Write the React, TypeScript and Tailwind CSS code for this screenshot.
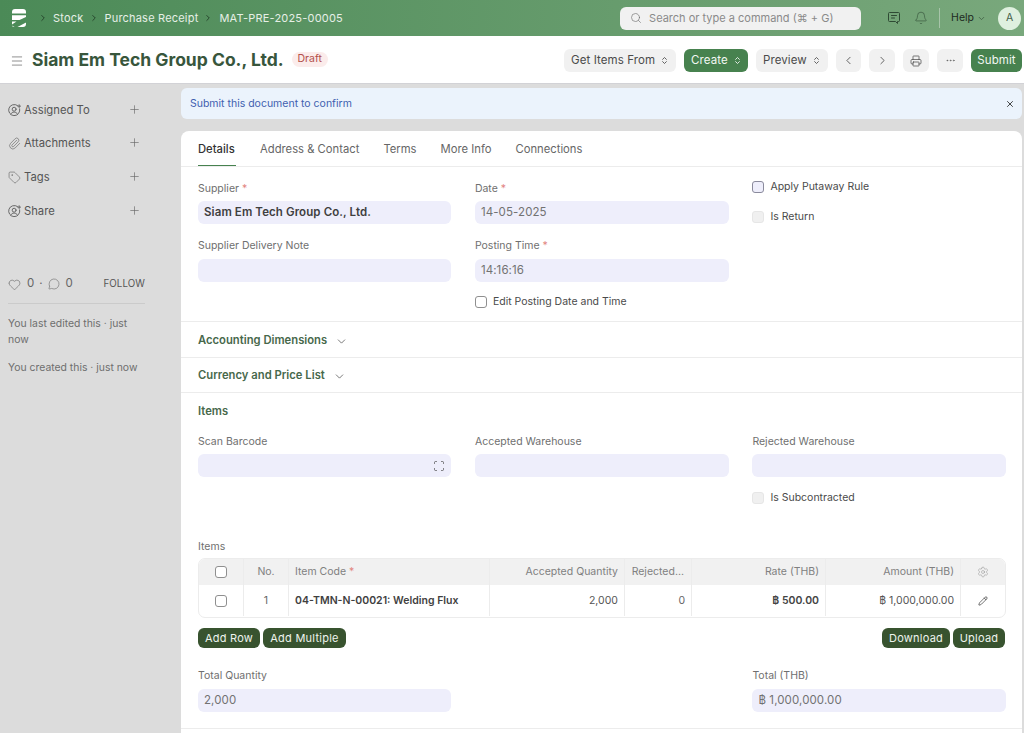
import React from "react";
import { Search, Bell, ChevronDown, ChevronLeft, ChevronRight, ChevronsUpDown, Printer, Ellipsis, X, Plus, Paperclip, Tag, Heart, MessageCircle, Settings, Pencil, Scan, Menu } from "lucide-react";

function Logo() {
  return (
    <svg width="14" height="18" viewBox="0 0 14 18" className="shrink-0">
      <path d="M3 0h8a3 3 0 0 1 3 3v1.6H0V3a3 3 0 0 1 3-3z" fill="#fff" />
      <path d="M0 6.2h14V8L7.5 11H0z" fill="#fff" />
      <path d="M14 9.7V15a3 3 0 0 1-3 3H5.5L14 13.6z" fill="#fff" />
      <path d="M0 12.6h4.5L0 15.6z" fill="#fff" />
      <path d="M0 16.4 L2.6 18H2.4A2.4 2.4 0 0 1 0 16.4z" fill="#fff" />
    </svg>
  );
}

function CircleUserPlus() {
  return (
    <svg width="13" height="13" viewBox="0 0 14 14" fill="none" stroke="#5f5f5f" strokeWidth="1" strokeLinecap="round" className="shrink-0">
      <path d="M10.2 1.6A6 6 0 1 0 12.6 5.2" />
      <circle cx="6.6" cy="5.6" r="2.1" />
      <path d="M3 11c.8-1.7 2-2.3 3.6-2.3s2.8.6 3.6 2.3" />
      <path d="M12 .8v3M10.5 2.3h3" />
    </svg>
  );
}

function Btn({ children, primary, className = "" }: { children: React.ReactNode; primary?: boolean; className?: string }) {
  return (
    <div className={`h-[23px] flex items-center rounded-[6px] text-[11.5px] tracking-[0.1px] ${primary ? "bg-[#47824f] text-[#f2f7f2]" : "bg-[#f1f1f1] text-[#4b4b4b]"} ${className}`}>
      {children}
    </div>
  );
}

function Label({ children, req }: { children: React.ReactNode; req?: boolean }) {
  return (
    <div className="text-[10.5px] leading-[14px] text-[#6f6f6f] h-[14px]">
      {children}
      {req && <span className="text-[#e2857f] ml-[3px]">*</span>}
    </div>
  );
}

function Input({ children, bold, right, mt = "mt-[5px]" }: { children?: React.ReactNode; bold?: boolean; right?: React.ReactNode; mt?: string }) {
  return (
    <div className={`${mt} h-[23px] rounded-[6px] bg-[#eeeefb] px-[6px] flex items-center justify-between tracking-[0.1px] ${bold ? "font-semibold text-[#3f3f3f] text-[11.5px]" : "text-[#727272] text-[11.5px]"}`}>
      <span>{children}</span>
      {right}
    </div>
  );
}

function Check({ disabled, tint }: { disabled?: boolean; tint?: boolean }) {
  return (
    <span className={`inline-block w-[12px] h-[12px] rounded-[3px] border shrink-0 ${disabled ? "bg-[#f0f0f0] border-[#e6e6e6]" : tint ? "bg-[#eeeefb] border-[#8a8a9c]" : "bg-white border-[#8f8f8f]"}`} />
  );
}

function CheckRow({ label, disabled, tint }: { label: string; disabled?: boolean; tint?: boolean }) {
  return (
    <div className="flex items-center gap-[6px] h-[14px]">
      <Check disabled={disabled} tint={tint} />
      <span className="text-[10.5px] text-[#4a4a4a]">{label}</span>
    </div>
  );
}

function SideItem({ icon, label, mt }: { icon: React.ReactNode; label: string; mt: string }) {
  return (
    <div className={`flex items-center justify-between h-[16px] ${mt}`}>
      <div className="flex items-center gap-[3px] text-[11.25px] text-[#555]">
        <span className="w-[13px] flex justify-center">{icon}</span>
        <span>{label}</span>
      </div>
      <Plus size={13} strokeWidth={1.2} color="#666" className="-mt-[2px]" />
    </div>
  );
}

function Cell({ children, className = "", sep = true }: { children?: React.ReactNode; className?: string; sep?: boolean }) {
  return <div className={`flex items-center px-[6px] ${sep ? "border-r border-[#ececec]" : ""} ${className}`}>{children}</div>;
}

const cols = "grid grid-cols-[45px_45px_201px_135px_67px_134px_135px_1fr]";
const formCols = "grid grid-cols-[253.4px_254px_1fr] gap-x-[23.5px]";

export default function App() {
  return (
    <div className="w-[1024px] h-[733px] overflow-hidden bg-[#dcdcdc] flex flex-col font-['Inter',sans-serif]">
      {/* Navbar */}
      <div className="h-[36px] shrink-0 bg-gradient-to-r from-[#4b8a57] to-[#79a87c] flex items-center pl-[12px] pr-[3px]">
        <Logo />
        <div className="flex items-center text-[11px] tracking-[0.2px] text-[#e6efe6] ml-[12px]">
          <ChevronRight size={10} color="#1f3a24" strokeWidth={2} />
          <span className="ml-[5px]">Stock</span>
          <ChevronRight size={10} color="#1f3a24" strokeWidth={2} className="ml-[6px]" />
          <span className="ml-[5px]">Purchase Receipt</span>
          <ChevronRight size={10} color="#1f3a24" strokeWidth={2} className="ml-[5px]" />
          <span className="ml-[6px]">MAT-PRE-2025-00005</span>
        </div>
        <div className="ml-auto flex items-center">
          <div className="w-[241px] h-[23px] rounded-[6px] bg-[#f1f1f1] flex items-center pl-[10px] text-[11px] text-[#8a8a8a]">
            <Search size={12} color="#6f6f6f" strokeWidth={1.3} />
            <span className="ml-[7px]">Search or type a command (⌘ + G)</span>
          </div>
          <svg width="14" height="14" viewBox="0 0 14 14" fill="none" stroke="#2f4a34" strokeWidth="1" strokeLinejoin="round" className="ml-[26px]">
            <path d="M2.5 1.5h9a1 1 0 0 1 1 1v7a1 1 0 0 1-1 1h-1v2l-2-2h-6a1 1 0 0 1-1-1v-7a1 1 0 0 1 1-1z" />
            <path d="M4.5 4.5h5M4.5 7h3" strokeLinecap="round" />
          </svg>
          <Bell size={14} color="#2f4a34" strokeWidth={1} className="ml-[13px]" />
          <div className="w-px h-[20px] bg-[#a7c4a9] ml-[11px]" />
          <span className="ml-[11px] text-[10.5px] text-[#1d2a1f]">Help</span>
          <ChevronDown size={9} color="#3c5a40" className="ml-[3px]" />
          <div className="ml-[12px] w-[23px] h-[23px] rounded-full bg-[#dff0df] flex items-center justify-center text-[10.5px] text-[#44604a]">A</div>
        </div>
      </div>

      {/* Page head */}
      <div className="h-[48px] shrink-0 bg-white flex items-center pl-[10px] pr-[2px] pt-[2px] border-b border-[#d2d2d6]">
        <Menu size={14} color="#6e6e6e" strokeWidth={1.3} />
        <span className="ml-[8px] text-[17.5px] font-bold text-[#38563c]">Siam Em Tech Group Co., Ltd.</span>
        <span className="ml-[8px] mb-[3px] h-[15px] px-[6px] rounded-full bg-[#fbeceb] text-[#b3504c] text-[10.5px] flex items-center">Draft</span>
        <div className="ml-auto flex items-center">
          <Btn className="w-[112px] pl-[7px] gap-[5px]">Get Items From<ChevronsUpDown size={9} color="#444" strokeWidth={2.2} /></Btn>
          <Btn primary className="w-[64px] pl-[7px] gap-[5px] ml-[8px]">Create<ChevronsUpDown size={9} color="#fff" strokeWidth={2.2} /></Btn>
          <Btn className="w-[72px] pl-[7px] gap-[5px] ml-[8px]">Preview<ChevronsUpDown size={9} color="#444" strokeWidth={2.2} /></Btn>
          <Btn className="w-[25px] justify-center ml-[8px]"><ChevronLeft size={13} color="#444" strokeWidth={1.5} /></Btn>
          <Btn className="w-[26px] justify-center ml-[8px]"><ChevronRight size={13} color="#444" strokeWidth={1.5} /></Btn>
          <Btn className="w-[26px] justify-center ml-[8px]"><Printer size={12} color="#444" strokeWidth={1.4} /></Btn>
          <Btn className="w-[26px] justify-center ml-[8px]"><Ellipsis size={11} color="#555" strokeWidth={1.3} /></Btn>
          <Btn primary className="w-[51px] justify-center ml-[8px]">Submit</Btn>
        </div>
      </div>

      {/* Body */}
      <div className="flex-1 flex min-h-0">
        {/* Sidebar */}
        <aside className="w-[181px] shrink-0 pl-[8px] pr-[40px]">
          <SideItem mt="mt-[18px]" icon={<CircleUserPlus />} label="Assigned To" />
          <SideItem mt="mt-[17px]" icon={<Paperclip size={13} color="#5f5f5f" strokeWidth={1.1} />} label="Attachments" />
          <SideItem mt="mt-[18px]" icon={<Tag size={13} color="#5f5f5f" strokeWidth={1.1} />} label="Tags" />
          <SideItem mt="mt-[18px]" icon={<CircleUserPlus />} label="Share" />
          <div className="mt-[57px] -mr-[4px] flex items-center h-[16px] text-[11.5px] text-[#666]">
            <Heart size={13} strokeWidth={1} color="#555" />
            <span className="ml-[6px]">0</span>
            <span className="ml-[5px]">·</span>
            <MessageCircle size={12} strokeWidth={1} color="#555" className="ml-[5px]" />
            <span className="ml-[6px]">0</span>
            <span className="ml-auto text-[9.75px] text-[#555] tracking-[0.1px]">FOLLOW</span>
          </div>
          <div className="mt-[11px] -mr-[4px] border-t border-[#cbcbcb] pt-[12px] text-[10.4px] leading-[16px] text-[#6e6e6e]">
            You last edited this · just now
          </div>
          <div className="mt-[12px] text-[10.4px] leading-[16px] text-[#6e6e6e] whitespace-nowrap">You created this · just now</div>
        </aside>

        {/* Main */}
        <main className="flex-1 pr-[2px] min-w-0">
          <div className="mt-[4px] h-[31px] rounded-[6px] bg-[#ebf3fc] flex items-center justify-between pl-[9px] pr-[7px] text-[10.5px] text-[#3f5fb0]">
            <span>Submit this document to confirm</span>
            <X size={10} color="#222" strokeWidth={2} />
          </div>
          <div className="mt-[12px] bg-white rounded-t-[8px] h-[700px]">
            {/* Tabs */}
            <div className="h-[36px] border-b border-[#ececec] flex pl-[17px] pr-[16px] gap-[24px] text-[11.25px] text-[#666]">
              <div className="h-[35px] w-[38px] pt-[2px] flex items-center font-medium text-[#333] border-b border-[#47824f] whitespace-nowrap">Details</div>
              <div className="pt-[2px] flex items-center">Address &amp; Contact</div>
              <div className="pt-[2px] flex items-center">Terms</div>
              <div className="pt-[2px] flex items-center">More Info</div>
              <div className="pt-[2px] flex items-center">Connections</div>
            </div>

            {/* Details */}
            <div className={`h-[155px] border-b border-[#ececec] pl-[17px] pr-[16px] pt-[15px] ${formCols}`}>
              <div>
                <Label req>Supplier</Label>
                <Input bold>Siam Em Tech Group Co., Ltd.</Input>
                <div className="mt-[15px]"><Label>Supplier Delivery Note</Label></div>
                <Input mt="mt-[6px]" />
              </div>
              <div>
                <Label req>Date</Label>
                <Input>14-05-2025</Input>
                <div className="mt-[15px]"><Label req>Posting Time</Label></div>
                <Input mt="mt-[6px]">14:16:16</Input>
                <div className="mt-[13px]"><CheckRow label="Edit Posting Date and Time" /></div>
              </div>
              <div className="-mt-[2px]">
                <CheckRow tint label="Apply Putaway Rule" />
                <div className="mt-[16px]"><CheckRow disabled label="Is Return" /></div>
              </div>
            </div>

            <div className="h-[36px] border-b border-[#ececec] pl-[17px] pt-[1px] flex items-center gap-[8px] text-[11.25px] font-semibold text-[#47684b]">
              Accounting Dimensions <ChevronDown size={13} strokeWidth={1.2} color="#333" className="mt-[2px]" />
            </div>
            <div className="h-[35px] border-b border-[#ececec] pl-[17px] pt-[1px] flex items-center gap-[8px] text-[11.25px] font-semibold text-[#47684b]">
              Currency and Price List <ChevronDown size={13} strokeWidth={1.2} color="#333" className="mt-[2px]" />
            </div>

            {/* Items */}
            <div className="pl-[17px] pr-[16px] pt-[11px] h-[336px] border-b border-[#ececec]">
              <div className="text-[11.25px] leading-[14px] font-semibold text-[#47684b]">Items</div>
              <div className={`mt-[17px] ${formCols}`}>
                <div>
                  <Label>Scan Barcode</Label>
                  <Input right={<Scan size={12} color="#444" strokeWidth={1.4} />} />
                </div>
                <div>
                  <Label>Accepted Warehouse</Label>
                  <Input />
                </div>
                <div>
                  <Label>Rejected Warehouse</Label>
                  <Input />
                  <div className="mt-[14px]"><CheckRow disabled label="Is Subcontracted" /></div>
                </div>
              </div>

              <div className="mt-[35px]"><Label>Items</Label></div>
              <div className="mt-[4px] h-[60px] rounded-[7px] border border-[#ececec] overflow-hidden text-[10.5px]">
                <div className={`${cols} h-[26px] bg-[#f1f1f1] text-[#808080]`}>
                  <Cell className="justify-center"><Check /></Cell>
                  <Cell className="justify-center">No.</Cell>
                  <Cell>Item Code<span className="text-[#e2857f] ml-[3px]">*</span></Cell>
                  <Cell className="justify-end">Accepted Quantity</Cell>
                  <Cell className="justify-end whitespace-nowrap pr-[7px]">Rejected...</Cell>
                  <Cell className="justify-end">Rate (THB)</Cell>
                  <Cell className="justify-end">Amount (THB)</Cell>
                  <Cell sep={false} className="justify-center"><Settings size={12} color="#8f8f8f" strokeWidth={1} /></Cell>
                </div>
                <div className={`${cols} h-[31px] text-[#444]`}>
                  <Cell className="justify-center"><Check /></Cell>
                  <Cell className="justify-center text-[#666]">1</Cell>
                  <Cell className="font-semibold text-[10.5px] text-[#3f3f3f] whitespace-nowrap">04-TMN-N-00021: Welding Flux</Cell>
                  <Cell className="justify-end text-[#555]">2,000</Cell>
                  <Cell className="justify-end text-[#666]">0</Cell>
                  <Cell className="justify-end font-semibold text-[#444]">฿ 500.00</Cell>
                  <Cell className="justify-end text-[#555]">฿ 1,000,000.00</Cell>
                  <Cell sep={false} className="justify-center"><Pencil size={10} color="#222" strokeWidth={1.5} /></Cell>
                </div>
              </div>

              <div className="mt-[10px] pr-[1px] flex items-center gap-[3px] text-[11px] tracking-[0.25px] text-[#eef3ee]">
                <div className="h-[20px] w-[62px] rounded-[6px] bg-[#38532f] flex items-center justify-center">Add Row</div>
                <div className="h-[20px] w-[83px] rounded-[6px] bg-[#38532f] flex items-center justify-center">Add Multiple</div>
                <div className="ml-auto h-[20px] w-[68px] rounded-[6px] bg-[#38532f] flex items-center justify-center">Download</div>
                <div className="h-[20px] w-[52px] rounded-[6px] bg-[#38532f] flex items-center justify-center">Upload</div>
              </div>

              <div className={`mt-[21px] ${formCols}`}>
                <div>
                  <Label>Total Quantity</Label>
                  <Input mt="mt-[6px]">2,000</Input>
                </div>
                <div />
                <div>
                  <Label>Total (THB)</Label>
                  <Input mt="mt-[6px]">฿ 1,000,000.00</Input>
                </div>
              </div>
            </div>
          </div>
        </main>
      </div>
    </div>
  );
}
